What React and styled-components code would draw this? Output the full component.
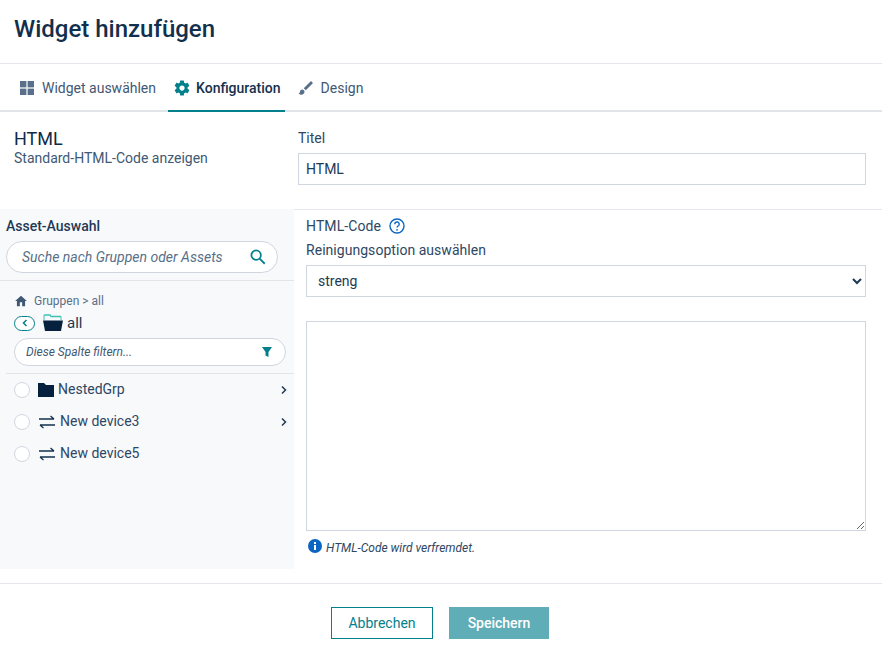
import React from 'react';
import styled, { createGlobalStyle } from 'styled-components';

const Global = createGlobalStyle`
  html, body { margin: 0; padding: 0; background: #fff; }
  body { font-family: Roboto, "Liberation Sans", sans-serif; color: #14304d; }
  * { box-sizing: border-box; }
`;
const Page = styled.div`width: 882px; height: 657px; display: flex; flex-direction: column; overflow: hidden;`;
const Header = styled.header`height: 65px; padding: 14px 14px 0; border-bottom: 1px solid #e4e7ec;`;
const Heading = styled.h1`margin: 0; font-size: 24px; line-height: 30px; font-weight: 500; color: #12304d;`;
const Tabs = styled.nav`height: 48px; display: flex; padding-left: 14px; border-bottom: 2px solid #e1e5e9;`;
const Tab = styled.div`
  height: 48px; display: flex; align-items: center; gap: ${p => p.$gap || 7}px; padding: 0 ${p => p.$pr || 5}px 0 5px; margin-right: ${p => p.$mr || 0}px;
  font-size: 14px; font-weight: ${p => p.$active ? 500 : 400}; color: ${p => p.$active ? '#14304d' : '#3f5873'};
  box-shadow: ${p => p.$active ? 'inset 0 -2px 0 #04808c' : 'none'};
`;
const Body = styled.div`display: flex; flex-direction: column; flex: 1;`;
const TopRow = styled.div`height: 97px; display: flex; padding-top: 1px;`;
const Info = styled.div`width: 298px; padding: 16px 14px 0;`;
const InfoTitle = styled.div`font-size: 18px; line-height: 20px; color: #0f2b47;`;
const InfoSub = styled.div`font-size: 14px; line-height: 16px; color: #3f5873; margin-top: 1px;`;
const TitleField = styled.div`width: 568px; padding-top: 16px;`;
const Label = styled.div`font-size: 14px; line-height: 18px; font-weight: 400; color: #2e4763;`;
const TextInput = styled.div`
  height: 32px; margin-top: 6px; border: 1px solid #d0d6e0; padding: 0 7px;
  display: flex; align-items: center; font-size: 14px; color: #1e3955; background: #fff;
`;
const Columns = styled.div`display: flex; height: 374px; position: relative;`;
const Side = styled.aside`width: 294px; height: 360px; background: #f8f9fb; display: flex; flex-direction: column;`;
const SideTop = styled.div`padding: 8px 0 7px 6px; border-bottom: 1px solid #e1e5e9;`;
const SideLabel = styled.div`font-size: 14px; line-height: 18px; font-weight: 500; color: #1f3a56;`;
const Search = styled.div`
  height: 32px; margin: 6px 16px 0 0; border: 1px solid #d0d6e0; border-radius: 16px; background: #fff;
  padding: 0 10px 0 15px; display: flex; align-items: center; justify-content: space-between;
  font-size: 14px; font-style: italic; color: #587089;
`;
const Crumb = styled.div`
  display: flex; align-items: center; gap: 6px; height: 16px; margin: 12px 0 0 14px; font-size: 12px; color: #587089;
`;
const Folder = styled.div`display: flex; align-items: center; height: 20px; margin: 4px 0 0 14px; font-size: 15px; color: #1f3a56;`;
const Back = styled.div`
  width: 21px; height: 15px; border: 1px solid #04808c; border-radius: 8px; margin-right: 8px;
  display: flex; align-items: center; justify-content: center; background: #fff;
`;
const FolderName = styled.span`margin-left: 4px;`;
const Filter = styled.div`
  height: 28px; margin: 5px 8px 0 14px; border: 1px solid #d0d6e0; border-radius: 14px; background: #fff;
  padding: 0 12px 0 11px; display: flex; align-items: center; justify-content: space-between;
  font-size: 12px; font-style: italic; color: #3f5873;
`;
const List = styled.div`margin: 7px 0 0 6px; border-top: 1px solid #e1e5e9; padding-top: 0;`;
const Row = styled.div`height: 32px; display: flex; align-items: center; padding: 0 6px 0 8px; font-size: 14px; color: #2e4763;`;
const Radio = styled.span`width: 16px; height: 16px; border-radius: 50%; border: 1px solid #d0d6e0; background: #fff; margin-right: ${p => p.$mr || 8}px; flex: none;`;
const RowText = styled.span`flex: 1; margin-left: ${p => p.$ml}px; margin-top: -2px;`;
const Main = styled.main`flex: 1; border-top: 1px solid #e4e7ec; padding: 7px 16px 0 12px; position: relative;`;
const CodeLabel = styled.div`display: flex; align-items: center; gap: 8px; font-size: 14px; line-height: 18px; color: #2e4763; letter-spacing: .1px;`;
const CleanLabel = styled(Label)`margin-top: 6px; letter-spacing: .04px;`;
const Select = styled.select`
  display: block; width: 100%; height: 32px; margin-top: 6px; border: 1px solid #d0d6e0; background: #fff; padding: 0 7px;
  font: 14px Roboto, sans-serif; color: #1e3955; border-radius: 0; outline: none;
`;
const Area = styled.textarea`display: block; width: 100%; height: 210px; margin-top: 24px; border: 1px solid #d0d6e0; background: #fff; outline: none; border-radius: 0;`;
const Hint = styled.div`display: flex; align-items: center; gap: 4px; margin: 9px 0 0 2px; font-size: 12px; font-style: italic; color: #2e4763; height: 16px;`;
const HintIcon = styled.svg`width: 14px; height: 14px; transform: translateY(-2px);`;
const Footer = styled.footer`
  height: 74px; border-top: 1px solid #e4e7ec; display: flex; justify-content: center; gap: 16px; padding: 23px 2px 0 0;
`;
const Button = styled.button`
  height: 32px; width: ${p => p.$w}px; font: ${p => p.$primary ? 500 : 400} 14px Roboto, sans-serif; border-radius: 0;
  border: 1px solid ${p => p.$primary ? '#5fadb7' : '#04808c'};
  background: ${p => p.$primary ? '#5fadb7' : '#fff'}; color: ${p => p.$primary ? '#fff' : '#04808c'};
`;

const Grid = () => <svg width="16" height="16" viewBox="0 0 16 16" fill="#587089"><rect x="1" y="1" width="6.4" height="6.4"/><rect x="8.6" y="1" width="6.4" height="6.4"/><rect x="1" y="8.6" width="6.4" height="6.4"/><rect x="8.6" y="8.6" width="6.4" height="6.4"/></svg>;
const Gear = () => <svg width="18" height="18" viewBox="0 0 24 24" fill="#04808c"><path d="M19.43 12.98c.04-.32.07-.64.07-.98s-.03-.66-.07-.98l2.11-1.65c.19-.15.24-.42.12-.64l-2-3.46c-.12-.22-.39-.3-.61-.22l-2.49 1c-.52-.4-1.08-.73-1.69-.98l-.38-2.65C14.46 2.18 14.25 2 14 2h-4c-.25 0-.46.18-.49.42l-.38 2.65c-.61.25-1.17.59-1.69.98l-2.49-1c-.23-.09-.49 0-.61.22l-2 3.46c-.13.22-.07.49.12.64l2.11 1.65c-.04.32-.07.65-.07.98s.03.66.07.98l-2.11 1.65c-.19.15-.24.42-.12.64l2 3.46c.12.22.39.3.61.22l2.49-1c.52.4 1.08.73 1.69.98l.38 2.65c.03.24.24.42.49.42h4c.25 0 .46-.18.49-.42l.38-2.65c.61-.25 1.17-.59 1.69-.98l2.49 1c.23.09.49 0 .61-.22l2-3.46c.12-.22.07-.49-.12-.64l-2.11-1.65zM12 15.5c-1.93 0-3.5-1.57-3.5-3.5s1.57-3.5 3.5-3.5 3.5 1.57 3.5 3.5-1.57 3.5-3.5 3.5z"/></svg>;
const Brush = () => <svg width="18" height="18" viewBox="0 0 24 24" fill="#587089"><path d="M7 14c-1.66 0-3 1.34-3 3 0 1.31-1.16 2-2 2 .92 1.22 2.49 2 4 2 2.21 0 4-1.79 4-4 0-1.66-1.34-3-3-3zm13.71-9.37l-1.34-1.34a.996.996 0 00-1.41 0L9 12.25 11.75 15l8.96-8.96a.996.996 0 000-1.41z"/></svg>;
const SearchIcon = () => <svg width="18" height="18" viewBox="0 0 24 24" fill="none" stroke="#04808c" strokeWidth="2.4"><circle cx="9.5" cy="9.5" r="6.3"/><path d="M14.2 14.2L21 21"/></svg>;
const Home = () => <svg width="14" height="14" viewBox="0 0 24 24" fill="#3f5873"><path d="M10 21v-7h4v7h5v-9h3L12 3 2 12h3v9z"/></svg>;
const Chevron = ({dir='right', c='#1f3a56'}) => <svg width="8" height="10" viewBox="0 0 8 10" fill="none" stroke={c} strokeWidth="1.5">{dir==='right' ? <path d="M2 1.5L5.5 5 2 8.5"/> : <path d="M5.5 2L2.5 5l3 3"/>}</svg>;
const OpenFolder = () => <svg width="20" height="18" viewBox="0 0 20 18"><path d="M1 1h6l1 1.5h10" fill="none" stroke="#3cc0b8" strokeWidth="1.3"/><path d="M1 1v5M18 2.500V6" fill="none" stroke="#3cc0b8" strokeWidth="1"/><path d="M0 6.500h20l-2 10.500H2z" fill="#06213e"/></svg>;
const Funnel = () => <svg width="12" height="12" viewBox="0 0 12 12" fill="#04808c"><path d="M1 1h10L7.500 6v5l-3-1.500V6z"/></svg>;
const ClosedFolder = () => <svg width="16" height="14" viewBox="0 0 16 14" fill="#06213e"><path d="M0 0h6l2 2h8v12H0z"/></svg>;
const Swap = () => <svg width="16" height="14" viewBox="0 0 16 14" fill="none" stroke="#14304d" strokeWidth="1.3"><path d="M0 4h15M11.500 1L15 4M16 10H1M4.500 13L1 10"/></svg>;
const Help = () => <svg width="16" height="16" viewBox="0 0 16 16" fill="none"><circle cx="8" cy="8" r="7" stroke="#0a66c2" strokeWidth="1.4"/><path d="M5.800 6.200a2.200 2.200 0 114 1.200c-.6.7-1.800 1-1.800 2.200" stroke="#0a66c2" strokeWidth="1.4"/><circle cx="8" cy="11.800" r=".9" fill="#0a66c2"/></svg>;
const InfoIcon = () => <HintIcon viewBox="0 0 14 14"><circle cx="7" cy="7" r="7" fill="#0a66c2"/><rect x="6" y="6" width="2" height="5" fill="#fff"/><rect x="6" y="3" width="2" height="2" fill="#fff"/></HintIcon>;

export default function App() {
  return (
    <Page>
      <Global />
      <Header><Heading>Widget hinzufügen</Heading></Header>
      <Tabs>
        <Tab $mr={7}><Grid /><span>Widget auswählen</span></Tab>
        <Tab $active $gap={5} $mr={7} $pr={4}><Gear /><span>Konfiguration</span></Tab>
        <Tab $gap={6}><Brush /><span>Design</span></Tab>
      </Tabs>
      <Body>
        <TopRow>
          <Info>
            <InfoTitle>HTML</InfoTitle>
            <InfoSub>Standard-HTML-Code anzeigen</InfoSub>
          </Info>
          <TitleField>
            <Label>Titel</Label>
            <TextInput>HTML</TextInput>
          </TitleField>
        </TopRow>
        <Columns>
          <Side>
            <SideTop>
              <SideLabel>Asset-Auswahl</SideLabel>
              <Search><span>Suche nach Gruppen oder Assets</span><SearchIcon /></Search>
            </SideTop>
            <Crumb><Home /><span>Gruppen &gt; all</span></Crumb>
            <Folder>
              <Back><Chevron dir="left" c="#04808c" /></Back>
              <OpenFolder />
              <FolderName>all</FolderName>
            </Folder>
            <Filter><span>Diese Spalte filtern...</span><Funnel /></Filter>
            <List>
              <Row><Radio /><ClosedFolder /><RowText $ml={4}>NestedGrp</RowText><Chevron /></Row>
              <Row><Radio $mr={9} /><Swap /><RowText $ml={5}>New device3</RowText><Chevron /></Row>
              <Row><Radio $mr={9} /><Swap /><RowText $ml={5}>New device5</RowText></Row>
            </List>
          </Side>
          <Main>
            <CodeLabel><span>HTML-Code</span><Help /></CodeLabel>
            <CleanLabel>Reinigungsoption auswählen</CleanLabel>
            <Select defaultValue="streng"><option>streng</option></Select>
            <Area />
            <Hint><InfoIcon /><span>HTML-Code wird verfremdet.</span></Hint>
          </Main>
        </Columns>
        <Footer>
          <Button $w={102}>Abbrechen</Button>
          <Button $w={100} $primary>Speichern</Button>
        </Footer>
      </Body>
    </Page>
  );
}
